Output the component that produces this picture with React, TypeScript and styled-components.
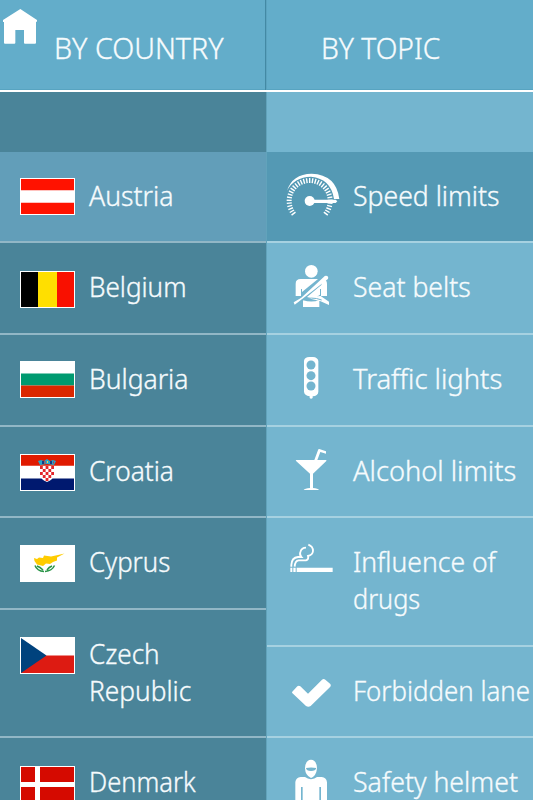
import React from 'react';
import styled, { createGlobalStyle } from 'styled-components';

const GlobalStyle = createGlobalStyle`
  * { box-sizing: border-box; }
  html, body { margin: 0; overflow: hidden; }
`;

const Page = styled.main`
  width: 533px;
  height: 800px;
  overflow: hidden;
  display: grid;
  grid-template-rows: 92px 708px;
  font-family: 'Noto Sans', sans-serif;
  font-weight: 300;
  color: #f6fbfd;
  -webkit-text-stroke: 0.35px #f6fbfd;
`;

const Header = styled.header`
  display: grid;
  grid-template-columns: 266px 267px;
  background: #63adca;
  border-bottom: 2px solid #fff;
`;

const Tab = styled.div<{ $first?: boolean }>`
  display: flex;
  align-items: flex-start;
  padding-left: ${p => (p.$first ? 3 : 54)}px;
  border-left: ${p => (p.$first ? 'none' : '1px solid #5ba3bf')};
  border-right: ${p => (p.$first ? '1px solid #4389a4' : 'none')};
  box-shadow: inset 0 -1px #58a4c1;
`;

const HomeIcon = styled.svg`
  width: 51px;
  height: 60px;
  flex: none;
`;

const Title = styled.h1<{ $scale: number }>`
  margin: 27px 0 0;
  font-size: 30px;
  line-height: 41px;
  font-weight: 300;
  white-space: nowrap;
  transform: scaleX(${p => p.$scale});
  transform-origin: 0 0;
`;

const Columns = styled.div`
  display: grid;
  grid-template-columns: 266px 267px;
`;

const Column = styled.ul<{ $kind: 'country' | 'topic' }>`
  list-style: none;
  margin: 0;
  padding: 60px 0 0;
  min-width: 0;
  overflow: hidden;
  background: ${p => (p.$kind === 'country' ? '#4a8499' : '#74b5cf')};
  border-left: ${p => (p.$kind === 'country' ? 'none' : '1px solid #62a3bb')};
`;

const Row = styled.li<{ $height: number; $line: string; $fill?: string }>`
  display: flex;
  align-items: flex-start;
  height: ${p => p.$height}px;
  background: ${p => p.$fill || 'transparent'};
  border-bottom: 2px solid ${p => p.$line};
`;

const FlagCell = styled.div<{ $top: number }>`
  flex: none;
  width: 89px;
  padding: ${p => p.$top}px 0 0 20px;
`;

const FlagArt = styled.svg`
  display: block;
  width: 55px;
  height: 37px;
`;

const TopicIcon = styled.svg`
  flex: none;
  width: 83px;
  height: 89px;
  margin-left: 3px;
  fill: #fff;
`;

const Label = styled.div<{ $top: number }>`
  flex: none;
  padding-top: ${p => p.$top}px;
  font-size: 26.6px;
  line-height: 36.6px;
`;

const Line = styled.span<{ $scale: number }>`
  display: block;
  width: max-content;
  white-space: nowrap;
  transform: scaleX(${p => p.$scale});
  transform-origin: 0 0;
`;

type Text = [string, number];

const Checks = () => (
  <g>
    <path d="M20 12H34V20Q34 25 27 28Q20 25 20 20Z" fill="#fff" />
    {[0, 1, 2, 3, 4].map(r =>
      [0, 1, 2, 3, 4]
        .filter(c => (r + c) % 2 === 0 && !(r === 4 && (c === 0 || c === 4)))
        .map(c => <rect key={`${r}${c}`} x={20 + c * 2.8} y={12 + r * 3} width="2.8" height="3" fill="#e3262b" />)
    )}
    <path d="M18 7L21 6L24 7L27 5L30 7L33 6L36 7L34 11L27 10L20 11Z" fill="#26a6cc" />
    <path d="M22 7h2v3h-2zM30 7h2v3h-2z" fill="#173a83" />
    <path d="M24.500 7h1v3h-1zM33 7.500h1v2h-1z" fill="#c23b3e" />
    <path d="M27 7h1v2h-1z" fill="#e9d34b" />
  </g>
);

const flags: Record<string, React.ReactNode> = {
  austria: <g><path fill="#ff1200" d="M1 1h53v11.300H1zM1 24.700h53V36H1z" /></g>,
  belgium: <g><path d="M1 1h17v35H1z" /><path fill="#ffdf00" d="M18 1h19v35H18z" /><path fill="#f91000" d="M37 1h17v35H37z" /></g>,
  bulgaria: <g><path fill="#009a70" d="M1 12.500h53v12H1z" /><path fill="#db2700" d="M1 24.500h53V36H1z" /></g>,
  croatia: <g><path fill="#e01a00" d="M1 1h53v10.700H1z" /><path fill="#00196f" d="M1 24.500h53V36H1z" /><Checks /></g>,
  cyprus: (
    <g>
      <path fill="#fc0" d="M14 13L17 14L19 12.500L23 13L24 10.500L31 11.500L38 10L44.500 8.500L37 12.500L37 15.500L33 17L30 19L26 18.500L23 21L17 19.500L14.500 16Z" />
      <path d="M15 20.500Q17 26 24 26.500M34.500 20.500Q32 26 25 26.500M17 21Q20 22 23 25M32 21Q29 22 27 25" fill="none" stroke="#299447" strokeWidth="1.500" />
    </g>
  ),
  czech: <g><path fill="#dd1b12" d="M1 18.500h53V36H1z" /><path fill="#00427d" d="M1 1L26.500 18.500L1 36z" /></g>,
  denmark: <g><path fill="#d50a00" d="M1 1h53v35H1z" /><path fill="#fff" d="M15 1h5v35h-5zM1 16h53v5H1z" /></g>,
};

const gaugeTicks = Array.from({ length: 33 }, (_, i) => {
  const a = ((-218 + i * 8) * Math.PI) / 180;
  return `M${119 + 54 * Math.cos(a)} ${123 + 54 * Math.sin(a)}L${119 + 69 * Math.cos(a)} ${123 + 69 * Math.sin(a)}`;
}).join('');

// Icon drawings use three units per CSS pixel; dy is the offset from the row's top edge.
const icons: Record<string, { dy: number; art: React.ReactNode }> = {
  speed: {
    dy: 24,
    art: (
      <g>
        <path d={gaugeTicks} stroke="#fff" strokeWidth="4.200" />
        <path d="M51 92Q67 42 125 41Q199 44 208 117H192Q183 56 123 50Q72 51 51 92Z" />
        <circle cx="119" cy="123" r="15" />
        <path d="M119 119H197L202 124L197 129H119Z" />
      </g>
    ),
  },
  belt: {
    dy: 21,
    art: (
      <g>
        <circle cx="124" cy="64" r="19" />
        <path d="M92 87H144L96 126V117H93V138H77V101Q77 87 92 87Z" />
        <path d="M159 87Q171 89 171 102V138H153V117H150V134L140 141H111L154 105Z" />
        <path d="M162 80Q165 76 172 78Q178 85 171 89L84 157L74 164L71 157L94 143Z" />
        <path d="M99 151Q124 158 148 151V171H99ZM152 138L177 155V165L150 153L111 144L124 140Z" />
        <path d="M94 151Q124 138 155 150" fill="none" stroke="#74b5cf" strokeWidth="3" />
      </g>
    ),
  },
  lights: {
    dy: 15,
    art: (
      <g>
        <path d="M102 62Q104 51 118 51H129Q143 52 145 63V155Q144 168 128 169V174Q123 179 119 174V169Q103 166 102 155Z" />
        <g fill="#74b5cf"><circle cx="123" cy="75" r="13.500" /><circle cx="123" cy="107" r="13.500" /><circle cx="123" cy="138" r="13.500" /></g>
      </g>
    ),
  },
  alcohol: {
    dy: 24,
    art: (
      <g>
        <path d="M77 75H133L145 43L148 42L168 49V56L151 51L142 75H169V78L129 116V159Q144 160 147 165H101Q104 160 120 159V116L79 79Z" />
      </g>
    ),
  },
  smoke: {
    dy: 36,
    art: (
      <g>
        <path d="M80 113H188V126H80ZM70 113H77V126H70ZM61 113H67V126H61Z" />
        <path d="M64 110V105Q65 83 84 81H94Q88 75 91 66Q95 53 108 53M74 110Q75 92 86 91H108Q117 88 114 78Q128 75 129 63Q129 49 115 44" fill="none" stroke="#fff" strokeWidth="5.500" />
      </g>
    ),
  },
  check: {
    dy: 39,
    art: <path d="M66 98Q66 95 69 93L82 79Q86 76 91 79L114 101L156 59Q161 55 166 59L181 72Q184 76 181 80L122 138Q115 143 108 138L69 101Z" />,
  },
  helmet: {
    dy: -234,
    art: (
      <g>
        <path d="M105 325Q106 300 123 299Q140 300 141 325Q139 348 123 354Q106 347 105 325Z" />
        <path d="M108 324Q123 321 139 324Q137 333 123 333Q109 333 108 324Z" fill="#74b5cf" />
        <path d="M92 351H105Q113 357 123 358Q134 357 141 351H155Q169 352 171 367V430H153V381H148V430H98V381H93V430H76V366Q78 352 92 351Z" />
      </g>
    ),
  },
};

const countries: { flag: string; h: number; top: number; text: number; lines: Text[] }[] = [
  { flag: 'austria', h: 91, top: 26, text: 26, lines: [['Austria', 1]] },
  { flag: 'belgium', h: 92, top: 28, text: 26, lines: [['Belgium', 0.98]] },
  { flag: 'bulgaria', h: 92, top: 26, text: 26, lines: [['Bulgaria', 0.995]] },
  { flag: 'croatia', h: 91, top: 27, text: 26, lines: [['Croatia', 0.988]] },
  { flag: 'cyprus', h: 92, top: 27, text: 26, lines: [['Cyprus', 0.97]] },
  { flag: 'czech', h: 128, top: 27, text: 26, lines: [['Czech', 0.98], ['Republic', 0.988]] },
  { flag: 'denmark', h: 92, top: 28, text: 26, lines: [['Denmark', 0.96]] },
];

const topics: { icon: string; h: number; text: number; lines: Text[] }[] = [
  { icon: 'speed', h: 91, text: 26, lines: [['Speed limits', 1]] },
  { icon: 'belt', h: 92, text: 26, lines: [['Seat belts', 1]] },
  { icon: 'lights', h: 92, text: 26, lines: [['Traffic lights', 1.03]] },
  { icon: 'alcohol', h: 91, text: 26, lines: [['Alcohol limits', 1.025]] },
  { icon: 'smoke', h: 129, text: 26, lines: [['Influence of', 0.998], ['drugs', 0.95]] },
  { icon: 'check', h: 91, text: 26, lines: [['Forbidden lane', 0.972]] },
  { icon: 'helmet', h: 92, text: 26, lines: [['Safety helmet', 1.004]] },
];

const RowLabel = ({ top, lines }: { top: number; lines: Text[] }) => (
  <Label $top={top}>
    {lines.map(([t, s]) => <Line key={t} $scale={s}>{t}</Line>)}
  </Label>
);

export default function App() {
  return (
    <>
      <GlobalStyle />
      <Page>
        <Header>
          <Tab $first>
            <HomeIcon viewBox="9 0 153 180" fill="#fff">
              <path d="M61 27L111 60V65H108V128Q108 131 105 131H75Q72 131 72 128V90H46V128Q46 131 43 131H15Q12 131 12 128V66H9V60Z" />
            </HomeIcon>
            <Title $scale={0.955}>BY COUNTRY</Title>
          </Tab>
          <Tab><Title $scale={0.94}>BY TOPIC</Title></Tab>
        </Header>
        <Columns>
          <Column $kind="country">
            {countries.map((c, i) => (
              <Row key={c.flag} $height={c.h} $line="#92b7c6" $fill={i === 0 ? '#629eb9' : undefined}>
                <FlagCell $top={c.top}>
                  <FlagArt viewBox="0 0 55 37"><path fill="#fff" d="M0 0h55v37H0z" />{flags[c.flag]}</FlagArt>
                </FlagCell>
                <RowLabel top={c.text} lines={c.lines} />
              </Row>
            ))}
          </Column>
          <Column $kind="topic">
            {topics.map((t, i) => (
              <Row key={t.icon} $height={t.h} $line="#a6d1e1" $fill={i === 0 ? '#5499b4' : undefined}>
                <TopicIcon viewBox={`0 ${-icons[t.icon].dy} 249 267`}>{icons[t.icon].art}</TopicIcon>
                <RowLabel top={t.text} lines={t.lines} />
              </Row>
            ))}
          </Column>
        </Columns>
      </Page>
    </>
  );
}
